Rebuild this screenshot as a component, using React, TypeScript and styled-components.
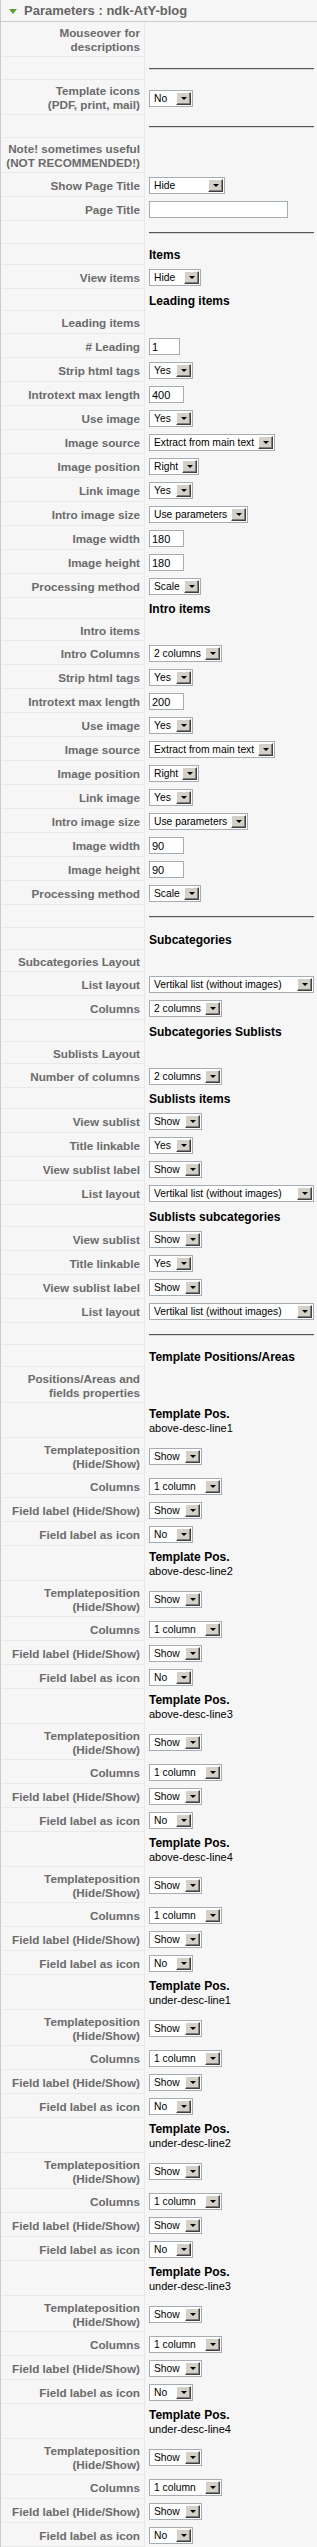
import React from 'react';
import styled, {createGlobalStyle} from 'styled-components';

const GlobalStyle = createGlobalStyle`
  body {
    margin: 0;
    background: #f6f6f6;
    font-family: "Liberation Sans", Arial, sans-serif;
  }
`;

type RowDef =
    | { k: 'hr'; h: number }
    | { k: 'label'; label: string; h: number }
    | { k: 'head'; text: string; sub?: string; h: number }
    | { k: 'select'; label: string; value: string; w: number; h?: number }
    | { k: 'input'; label: string; value: string; w: number; h?: number };

const sel = (label: string, value: string, w: number, h?: number): RowDef => ({k: 'select', label, value, w, h});
const inp = (label: string, value: string, w: number): RowDef => ({k: 'input', label, value, w});

const positions = [
    'above-desc-line1', 'above-desc-line2', 'above-desc-line3', 'above-desc-line4',
    'under-desc-line1', 'under-desc-line2', 'under-desc-line3', 'under-desc-line4',
];

const rows: RowDef[] = [
    {k: 'label', label: 'Mouseover for\ndescriptions', h: 35},
    {k: 'hr', h: 23},
    sel('Template icons\n(PDF, print, mail)', 'No', 44, 35),
    {k: 'hr', h: 23},
    {k: 'label', label: 'Note! sometimes useful\n(NOT RECOMMENDED!)', h: 35},
    sel('Show Page Title', 'Hide', 76),
    inp('Page Title', '', 139),
    {k: 'hr', h: 23},
    {k: 'head', text: 'Items', h: 21},
    sel('View items', 'Hide', 52),
    {k: 'head', text: 'Leading items', h: 22},
    {k: 'label', label: 'Leading items', h: 23},
    inp('# Leading', '1', 31),
    sel('Strip html tags', 'Yes', 44),
    inp('Introtext max length', '400', 35),
    sel('Use image', 'Yes', 44),
    sel('Image source', 'Extract from main text', 126),
    sel('Image position', 'Right', 50),
    sel('Link image', 'Yes', 44),
    sel('Intro image size', 'Use parameters', 99),
    inp('Image width', '180', 35),
    inp('Image height', '180', 35),
    sel('Processing method', 'Scale', 52),
    {k: 'head', text: 'Intro items', h: 21},
    {k: 'label', label: 'Intro items', h: 22},
    sel('Intro Columns', '2 columns', 73),
    sel('Strip html tags', 'Yes', 44),
    inp('Introtext max length', '200', 35),
    sel('Use image', 'Yes', 44),
    sel('Image source', 'Extract from main text', 126),
    sel('Image position', 'Right', 50),
    sel('Link image', 'Yes', 44),
    sel('Intro image size', 'Use parameters', 99),
    inp('Image width', '90', 35),
    inp('Image height', '90', 35),
    sel('Processing method', 'Scale', 52),
    {k: 'hr', h: 23},
    {k: 'head', text: 'Subcategories', h: 22},
    {k: 'label', label: 'Subcategories Layout', h: 22},
    sel('List layout', 'Vertikal list (without images)', 166),
    sel('Columns', '2 columns', 73),
    {k: 'head', text: 'Subcategories Sublists', h: 22},
    {k: 'label', label: 'Sublists Layout', h: 22},
    sel('Number of columns', '2 columns', 73),
    {k: 'head', text: 'Sublists items', h: 21},
    sel('View sublist', 'Show', 53),
    sel('Title linkable', 'Yes', 44),
    sel('View sublist label', 'Show', 53),
    sel('List layout', 'Vertikal list (without images)', 166),
    {k: 'head', text: 'Sublists subcategories', h: 22},
    sel('View sublist', 'Show', 53),
    sel('Title linkable', 'Yes', 44),
    sel('View sublist label', 'Show', 53),
    sel('List layout', 'Vertikal list (without images)', 166),
    {k: 'hr', h: 22},
    {k: 'head', text: 'Template Positions/Areas', h: 22},
    {k: 'label', label: 'Positions/Areas and\nfields properties', h: 36},
    ...positions.flatMap((p): RowDef[] => [
        {k: 'head', text: 'Template Pos.', sub: p, h: 35},
        sel('Templateposition\n(Hide/Show)', 'Show', 53, 36),
        sel('Columns', '1 column', 73),
        sel('Field label (Hide/Show)', 'Show', 53),
        sel('Field label as icon', 'No', 44),
    ]),
];

function App() {
    return (
        <>
            <GlobalStyle/>
            <Panel>
                <Title>
                    <Arrow/>
                    <span>Parameters : ndk-AtY-blog</span>
                </Title>
                <ParamList>
                    {rows.map((r, i) => (
                        <Row key={i} $h={r.h ?? 24}>
                            <Key>{'label' in r ? r.label : ''}</Key>
                            <Value>
                                {r.k === 'hr' && <Rule/>}
                                {r.k === 'head' && (
                                    <Heading>
                                        {r.text}
                                        {r.sub && <Sub>{r.sub}</Sub>}
                                    </Heading>
                                )}
                                {r.k === 'select' && (
                                    <SelectBox $w={r.w}>
                                        <SelectText>{r.value}</SelectText>
                                        <DropButton/>
                                    </SelectBox>
                                )}
                                {r.k === 'input' && <TextInput $w={r.w} readOnly value={r.value}/>}
                            </Value>
                        </Row>
                    ))}
                </ParamList>
            </Panel>
        </>
    );
}

export default App;

const Panel = styled.div`
  width: 317px;
  box-sizing: border-box;
  border-left: 1px solid #cccccc;
  background: #f6f6f6;
`

const Title = styled.h3`
  margin: 0;
  height: 20px;
  box-sizing: content-box;
  border-bottom: 1px solid #cccccc;
  display: flex;
  align-items: center;
  padding: 1px 0 0 8px;
  gap: 7px;
  font-size: 13px;
  font-weight: bold;
  color: #666666;
  line-height: 16px;
`

const Arrow = styled.span`
  width: 0;
  height: 0;
  border-left: 4px solid transparent;
  border-right: 4px solid transparent;
  border-top: 5px solid #5e9c35;
`

const ParamList = styled.div`
  padding-left: 1px;
`

const Row = styled.div<{ $h: number }>`
  display: grid;
  grid-template-columns: 143px 1fr;
  height: ${p => p.$h}px;
`

const Key = styled.div`
  box-sizing: border-box;
  border-right: 1px solid #e9e9e9;
  border-bottom: 1px solid #e9e9e9;
  display: flex;
  align-items: center;
  justify-content: flex-end;
  text-align: right;
  padding: 2px 4px 0 4px;
  white-space: pre;
  font-size: 11.7px;
  line-height: 14px;
  font-weight: bold;
  color: #6b6b6b;
`

const Value = styled.div`
  display: flex;
  align-items: center;
  padding: 2px 3px 1px 4px;
  min-width: 0;
`

const Rule = styled.hr`
  width: 100%;
  margin: 0;
  height: 0;
  border: none;
  border-top: 1px solid #555555;
  border-bottom: 1px solid #d8d8d8;
`

const Heading = styled.div`
  font-size: 12px;
  line-height: 14px;
  font-weight: bold;
  color: #000000;
`

const Sub = styled.div`
  font-size: 11px;
  font-weight: normal;
`

const SelectBox = styled.div<{ $w: number }>`
  width: ${p => p.$w}px;
  height: 17px;
  box-sizing: border-box;
  border: 1px solid #a5acb2;
  background: #ffffff;
  display: flex;
  align-items: stretch;
`

const SelectText = styled.span`
  flex: 1;
  padding-left: 4px;
  font-size: 10.3px;
  line-height: 15px;
  color: #000000;
  white-space: nowrap;
  overflow: hidden;
`

const DropButton = styled.span`
  width: 15px;
  margin: 1px;
  box-sizing: border-box;
  background: #d4d0c8;
  border-top: 1px solid #ffffff;
  border-left: 1px solid #ffffff;
  border-right: 1px solid #404040;
  border-bottom: 1px solid #404040;
  box-shadow: inset -1px -1px 0 #808080;
  display: flex;
  align-items: center;
  justify-content: center;

  &::after {
    content: '';
    width: 0;
    height: 0;
    border-left: 3px solid transparent;
    border-right: 3px solid transparent;
    border-top: 3px solid #000000;
  }
`

const TextInput = styled.input<{ $w: number }>`
  width: ${p => p.$w}px;
  height: 17px;
  box-sizing: border-box;
  margin: 0;
  padding: 0 2px;
  border: 1px solid #a5acb2;
  background: #ffffff;
  font-family: "Liberation Sans", Arial, sans-serif;
  font-size: 11px;
  color: #000000;
  outline: none;
`
